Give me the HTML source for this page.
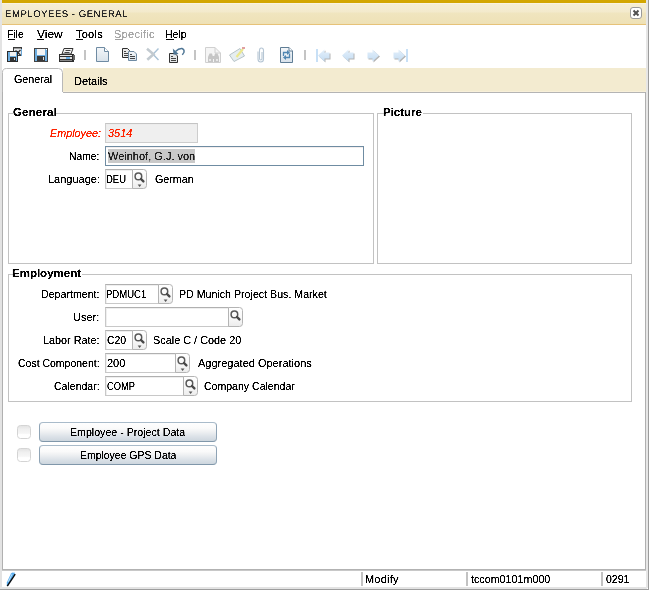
<!DOCTYPE html><html><head><meta charset="utf-8"><style>html,body{margin:0;padding:0;}body{width:649px;height:590px;position:relative;overflow:hidden;background:#fff;font-family:"Liberation Sans",sans-serif;}.t{position:absolute;white-space:nowrap;line-height:13px;font-family:"Liberation Sans",sans-serif;filter:url(#crisp);}</style></head><body><svg width="0" height="0" style="position:absolute"><filter id="crisp"><feComponentTransfer><feFuncA type="linear" slope="3" intercept="-0.65"/></feComponentTransfer></filter></svg>
<div style="position:absolute;left:0px;top:0px;width:2px;height:590px;background:#e3e3e3;"></div>
<div style="position:absolute;left:646px;top:0px;width:2px;height:590px;background:#e6e6e6;"></div>
<div style="position:absolute;left:648px;top:0px;width:1px;height:590px;background:#9c9c9c;"></div>
<div style="position:absolute;left:2px;top:587px;width:644px;height:2px;background:#e3e3e3;"></div>
<div style="position:absolute;left:0px;top:589px;width:649px;height:1px;background:#9e9e9e;"></div>
<div style="position:absolute;left:647px;top:588px;width:1px;height:1px;background:#fff;"></div>
<div style="position:absolute;left:2px;top:0px;width:644px;height:3px;background:#d3a600;"></div>
<div style="position:absolute;left:2px;top:3px;width:644px;height:21px;background:linear-gradient(#faf3de 0px,#faf3de 1px,#f5edd3 1px,#f3eacc 9px,#f0e5bf 10px,#eee1b6 21px);"></div>
<div style="position:absolute;left:2px;top:24px;width:644px;height:1px;background:#e6c278;"></div>
<svg style="position:absolute;left:630px;top:7px" width="12" height="12" viewBox="0 0 12 12"><rect x="0.5" y="0.5" width="11" height="11" rx="2.5" fill="#fff" stroke="#9a9a9a"/><path d="M3.5 3.5L8.5 8.5M8.5 3.5L3.5 8.5" stroke="#505050" stroke-width="2"/></svg>
<div style="position:absolute;left:63px;top:68px;width:583px;height:24px;background:#f3ebd0;"></div>
<div style="position:absolute;left:63px;top:91px;width:583px;height:1px;background:#f8f0da;"></div>
<div style="position:absolute;left:63px;top:92px;width:583px;height:1px;background:#b4b4b4;"></div>
<svg style="position:absolute;left:2px;top:68px" width="61" height="25" viewBox="0 0 61 25"><path d="M0.5 25V4.5A4 4 0 0 1 4.5 0.5H56.5A4 4 0 0 1 60.5 4.5V24" fill="#fff" stroke="#b8b8b8"/></svg>
<div style="position:absolute;left:2px;top:92px;width:1px;height:479px;background:#b0b0b0;"></div>
<div style="position:absolute;left:645px;top:92px;width:1px;height:479px;background:#b0b0b0;"></div>
<div style="position:absolute;left:2px;top:569px;width:644px;height:1px;background:#b2b2b2;"></div>
<div style="position:absolute;left:2px;top:570px;width:644px;height:1px;background:#c8c8c8;"></div>
<div style="position:absolute;left:8px;top:113px;width:364px;height:149px;border:1px solid #c2c2c2;"></div>
<div style="position:absolute;left:377px;top:113px;width:253px;height:149px;border:1px solid #c2c2c2;"></div>
<div style="position:absolute;left:8px;top:274px;width:622px;height:126px;border:1px solid #c2c2c2;"></div>
<div style="position:absolute;left:13px;top:106px;width:43px;height:12px;background:#fff;"></div>
<div style="position:absolute;left:384px;top:106px;width:39px;height:12px;background:#fff;"></div>
<div style="position:absolute;left:13px;top:267px;width:69px;height:12px;background:#fff;"></div>
<div style="position:absolute;left:105px;top:123px;width:93px;height:20px;background:#efefef;box-sizing:border-box;border:1px solid #cdcdcd;border-top-color:#c4c4c4;"></div><div style="position:absolute;left:106px;top:124px;width:91px;height:1px;background:#ececec;"></div><div style="position:absolute;left:106px;top:124px;width:1px;height:18px;background:#ececec;"></div>
<div style="position:absolute;left:105px;top:146px;width:259px;height:20px;box-sizing:border-box;border:1px solid #6f8ca2;background:#fff;"></div>
<div style="position:absolute;left:106px;top:147px;width:257px;height:1px;background:#f3eeee;"></div>
<div style="position:absolute;left:108px;top:149px;width:87px;height:14px;background:#c9c9c9;"></div>
<div style="position:absolute;left:105px;top:169px;width:28px;height:20px;background:#fff;box-sizing:border-box;border:1px solid #c8c8c8;border-top-color:#b0b0b0;"></div><div style="position:absolute;left:106px;top:170px;width:26px;height:1px;background:#efefef;"></div><div style="position:absolute;left:106px;top:170px;width:1px;height:18px;background:#efefef;"></div>
<svg style="position:absolute;left:132px;top:169px" width="15" height="20" viewBox="0 0 15 20"><defs><linearGradient id="sg" x1="0" y1="0" x2="0" y2="1"><stop offset="0" stop-color="#fff"/><stop offset="0.55" stop-color="#f8f8f8"/><stop offset="1" stop-color="#ececec"/></linearGradient></defs><path d="M0.5 0.5H11.5A3 3 0 0 1 14.5 3.5V16.5A3 3 0 0 1 11.5 19.5H0.5Z" fill="url(#sg)" stroke="#b4b4b4"/><circle cx="6.4" cy="7.4" r="3.3" fill="none" stroke="#585858" stroke-width="1.5"/><path d="M9 10L11.4 12.4" stroke="#484848" stroke-width="2.4" stroke-linecap="round"/><path d="M5.7 15.6h3.8l-1.9 2.4z" fill="#585858"/></svg>
<div style="position:absolute;left:105px;top:284px;width:54px;height:20px;background:#fff;box-sizing:border-box;border:1px solid #c8c8c8;border-top-color:#b0b0b0;"></div><div style="position:absolute;left:106px;top:285px;width:52px;height:1px;background:#efefef;"></div><div style="position:absolute;left:106px;top:285px;width:1px;height:18px;background:#efefef;"></div>
<svg style="position:absolute;left:158px;top:284px" width="15" height="20" viewBox="0 0 15 20"><defs><linearGradient id="sg" x1="0" y1="0" x2="0" y2="1"><stop offset="0" stop-color="#fff"/><stop offset="0.55" stop-color="#f8f8f8"/><stop offset="1" stop-color="#ececec"/></linearGradient></defs><path d="M0.5 0.5H11.5A3 3 0 0 1 14.5 3.5V16.5A3 3 0 0 1 11.5 19.5H0.5Z" fill="url(#sg)" stroke="#b4b4b4"/><circle cx="6.4" cy="7.4" r="3.3" fill="none" stroke="#585858" stroke-width="1.5"/><path d="M9 10L11.4 12.4" stroke="#484848" stroke-width="2.4" stroke-linecap="round"/><path d="M5.7 15.6h3.8l-1.9 2.4z" fill="#585858"/></svg>
<div style="position:absolute;left:105px;top:307px;width:124px;height:20px;background:#fff;box-sizing:border-box;border:1px solid #c8c8c8;border-top-color:#b0b0b0;"></div><div style="position:absolute;left:106px;top:308px;width:122px;height:1px;background:#efefef;"></div><div style="position:absolute;left:106px;top:308px;width:1px;height:18px;background:#efefef;"></div>
<svg style="position:absolute;left:228px;top:307px" width="15" height="20" viewBox="0 0 15 20"><defs><linearGradient id="sg" x1="0" y1="0" x2="0" y2="1"><stop offset="0" stop-color="#fff"/><stop offset="0.55" stop-color="#f8f8f8"/><stop offset="1" stop-color="#ececec"/></linearGradient></defs><path d="M0.5 0.5H11.5A3 3 0 0 1 14.5 3.5V16.5A3 3 0 0 1 11.5 19.5H0.5Z" fill="url(#sg)" stroke="#b4b4b4"/><circle cx="6.4" cy="7.4" r="3.3" fill="none" stroke="#585858" stroke-width="1.5"/><path d="M9 10L11.4 12.4" stroke="#484848" stroke-width="2.4" stroke-linecap="round"/></svg>
<div style="position:absolute;left:105px;top:330px;width:28px;height:20px;background:#fff;box-sizing:border-box;border:1px solid #c8c8c8;border-top-color:#b0b0b0;"></div><div style="position:absolute;left:106px;top:331px;width:26px;height:1px;background:#efefef;"></div><div style="position:absolute;left:106px;top:331px;width:1px;height:18px;background:#efefef;"></div>
<svg style="position:absolute;left:132px;top:330px" width="15" height="20" viewBox="0 0 15 20"><defs><linearGradient id="sg" x1="0" y1="0" x2="0" y2="1"><stop offset="0" stop-color="#fff"/><stop offset="0.55" stop-color="#f8f8f8"/><stop offset="1" stop-color="#ececec"/></linearGradient></defs><path d="M0.5 0.5H11.5A3 3 0 0 1 14.5 3.5V16.5A3 3 0 0 1 11.5 19.5H0.5Z" fill="url(#sg)" stroke="#b4b4b4"/><circle cx="6.4" cy="7.4" r="3.3" fill="none" stroke="#585858" stroke-width="1.5"/><path d="M9 10L11.4 12.4" stroke="#484848" stroke-width="2.4" stroke-linecap="round"/><path d="M5.7 15.6h3.8l-1.9 2.4z" fill="#585858"/></svg>
<div style="position:absolute;left:105px;top:353px;width:71px;height:20px;background:#fff;box-sizing:border-box;border:1px solid #c8c8c8;border-top-color:#b0b0b0;"></div><div style="position:absolute;left:106px;top:354px;width:69px;height:1px;background:#efefef;"></div><div style="position:absolute;left:106px;top:354px;width:1px;height:18px;background:#efefef;"></div>
<svg style="position:absolute;left:175px;top:353px" width="15" height="20" viewBox="0 0 15 20"><defs><linearGradient id="sg" x1="0" y1="0" x2="0" y2="1"><stop offset="0" stop-color="#fff"/><stop offset="0.55" stop-color="#f8f8f8"/><stop offset="1" stop-color="#ececec"/></linearGradient></defs><path d="M0.5 0.5H11.5A3 3 0 0 1 14.5 3.5V16.5A3 3 0 0 1 11.5 19.5H0.5Z" fill="url(#sg)" stroke="#b4b4b4"/><circle cx="6.4" cy="7.4" r="3.3" fill="none" stroke="#585858" stroke-width="1.5"/><path d="M9 10L11.4 12.4" stroke="#484848" stroke-width="2.4" stroke-linecap="round"/><path d="M5.7 15.6h3.8l-1.9 2.4z" fill="#585858"/></svg>
<div style="position:absolute;left:105px;top:376px;width:79px;height:20px;background:#fff;box-sizing:border-box;border:1px solid #c8c8c8;border-top-color:#b0b0b0;"></div><div style="position:absolute;left:106px;top:377px;width:77px;height:1px;background:#efefef;"></div><div style="position:absolute;left:106px;top:377px;width:1px;height:18px;background:#efefef;"></div>
<svg style="position:absolute;left:183px;top:376px" width="15" height="20" viewBox="0 0 15 20"><defs><linearGradient id="sg" x1="0" y1="0" x2="0" y2="1"><stop offset="0" stop-color="#fff"/><stop offset="0.55" stop-color="#f8f8f8"/><stop offset="1" stop-color="#ececec"/></linearGradient></defs><path d="M0.5 0.5H11.5A3 3 0 0 1 14.5 3.5V16.5A3 3 0 0 1 11.5 19.5H0.5Z" fill="url(#sg)" stroke="#b4b4b4"/><circle cx="6.4" cy="7.4" r="3.3" fill="none" stroke="#585858" stroke-width="1.5"/><path d="M9 10L11.4 12.4" stroke="#484848" stroke-width="2.4" stroke-linecap="round"/><path d="M5.7 15.6h3.8l-1.9 2.4z" fill="#585858"/></svg>
<svg style="position:absolute;left:17px;top:425px" width="14" height="14" viewBox="0 0 14 14"><defs><linearGradient id="cb425" x1="0" y1="0" x2="0" y2="1"><stop offset="0" stop-color="#e2e2e2"/><stop offset="0.3" stop-color="#f0f0f0"/><stop offset="0.6" stop-color="#f6f6f6"/><stop offset="0.7" stop-color="#fff"/></linearGradient></defs><rect x="0.5" y="0.5" width="13" height="13" rx="3" fill="url(#cb425)" stroke="#d4d4d4"/></svg>
<svg style="position:absolute;left:17px;top:448px" width="14" height="14" viewBox="0 0 14 14"><defs><linearGradient id="cb448" x1="0" y1="0" x2="0" y2="1"><stop offset="0" stop-color="#e2e2e2"/><stop offset="0.3" stop-color="#f0f0f0"/><stop offset="0.6" stop-color="#f6f6f6"/><stop offset="0.7" stop-color="#fff"/></linearGradient></defs><rect x="0.5" y="0.5" width="13" height="13" rx="3" fill="url(#cb448)" stroke="#d4d4d4"/></svg>
<div style="position:absolute;left:39px;top:422px;width:178px;height:20px;box-sizing:border-box;border:1px solid #8ea3b5;border-top-color:#a9bbca;border-bottom-color:#8097aa;border-radius:4px;background:linear-gradient(#fefefe 0%,#fafafa 30%,#eef0f2 50%,#dce2e8 75%,#cdd6de 100%);"></div>
<div style="position:absolute;left:39px;top:445px;width:178px;height:20px;box-sizing:border-box;border:1px solid #8ea3b5;border-top-color:#a9bbca;border-bottom-color:#8097aa;border-radius:4px;background:linear-gradient(#fefefe 0%,#fafafa 30%,#eef0f2 50%,#dce2e8 75%,#cdd6de 100%);"></div>
<div style="position:absolute;left:361px;top:572px;width:2px;height:14px;background:#c2c2c2;"></div>
<div style="position:absolute;left:466px;top:572px;width:2px;height:14px;background:#c2c2c2;"></div>
<div style="position:absolute;left:601px;top:572px;width:2px;height:14px;background:#c2c2c2;"></div>
<svg style="position:absolute;left:0;top:44px" width="420" height="22" viewBox="0 44 420 22">
<defs>
<linearGradient id="docg" x1="0" y1="0" x2="0" y2="1"><stop offset="0" stop-color="#f4f7fa"/><stop offset="1" stop-color="#d9e2ea"/></linearGradient>
<linearGradient id="arrg" x1="0" y1="0" x2="0" y2="1"><stop offset="0" stop-color="#e4f0fb"/><stop offset="1" stop-color="#c4dcf2"/></linearGradient>
</defs>
<!-- 1 save & close -->
<g shape-rendering="crispEdges">
<rect x="13" y="47" width="9" height="9" fill="#3a3a3a"/>
<rect x="14" y="48" width="7" height="7" fill="#e6e8ea"/>
<rect x="14" y="48" width="7" height="1" fill="#9a9a9a"/>
<rect x="21" y="49" width="1" height="7" fill="#6aa6d8"/>
</g>
<path d="M15.5 50.5 L20.5 55 M20.5 50 L16 54.5" stroke="#2c2c2c" stroke-width="1.3"/>
<g shape-rendering="crispEdges">
<rect x="7" y="51" width="11" height="11" fill="#2c2c2c"/>
<rect x="8" y="52" width="9" height="9" fill="#6eaee0"/>
<rect x="10" y="52" width="6" height="4" fill="#f2f2f2"/>
<rect x="10" y="57" width="6" height="4" fill="#333"/>
<rect x="14" y="58" width="1" height="2" fill="#ddd"/>
</g>
<!-- 2 floppy -->
<g shape-rendering="crispEdges">
<rect x="34" y="48" width="14" height="14" fill="#444"/>
<rect x="35" y="49" width="12" height="12" fill="#6eaee0"/>
<rect x="37" y="49" width="8" height="6" fill="#f4f4f4"/>
<rect x="37" y="56" width="8" height="5" fill="#3a3a3a"/>
<rect x="43" y="57" width="1" height="3" fill="#ddd"/>
<rect x="46" y="49" width="1" height="1" fill="#fff"/>
</g>
<!-- 3 printer -->
<path d="M64 48.5 H73 L71 54 H62 Z" fill="#f2f2f2" stroke="#333" stroke-width="1"/>
<path d="M65.5 50.5 H70.5 M64.5 52.5 H69.5" stroke="#444" stroke-width="1"/>
<g shape-rendering="crispEdges">
<rect x="59" y="54" width="15" height="8" fill="#2e2e2e"/>
<rect x="60" y="55" width="12" height="1" fill="#e8e8e8"/>
<rect x="60" y="57" width="12" height="2" fill="#e0e0e0"/>
<rect x="66" y="57" width="4" height="2" fill="#6ab0e8"/>
<rect x="60" y="60" width="12" height="1" fill="#888"/>
<rect x="73" y="55" width="2" height="5" fill="#666"/>
</g>
<!-- sep -->
<rect x="84" y="50" width="2" height="10" fill="#c4c4c4" shape-rendering="crispEdges"/>
<!-- 5 new doc -->
<path d="M96.5 47.5 H104.5 L108.5 51.5 V61.5 H96.5 Z" fill="url(#docg)" stroke="#6f8ba3"/>
<path d="M104.5 47.5 V51.5 H108.5" fill="#fff" stroke="#6f8ba3"/>
<!-- 6 copy -->
<path d="M122.5 48.5 H127.5 L129.5 50.5 V57.5 H122.5 Z" fill="#eaeaea" stroke="#2e2e2e"/>
<path d="M124 51.5 H126 M124 53.5 H128 M124 55.5 H128" stroke="#444"/>
<path d="M128.5 51.5 H134 L136.5 54 V60.5 H128.5 Z" fill="url(#docg)" stroke="#6f8ba3"/>
<path d="M130 54.5 H132 M130 56.5 H135 M130 58.5 H135" stroke="#444"/>
<!-- 7 delete X -->
<path d="M158.5 48.5 L153 54.2 L158.5 60" fill="none" stroke="#a9c2d6" stroke-width="1.4"/>
<path d="M147 48.8 L153.5 54.2 L147.3 59.8" fill="none" stroke="#c2cad0" stroke-width="2.6"/>
<!-- 8 undo -->
<path d="M169.5 53.5 H175 L177.5 56 V62.5 H169.5 Z" fill="#e4e6e8" stroke="#333"/>
<path d="M171 56.5 H173 M171 58.5 H176 M171 60.5 H176" stroke="#444"/>
<path d="M172.8 48.6 L173.6 54.8 L178.6 54 Z" fill="#4f7695"/>
<path d="M175.5 51.5 Q178.5 48.3 182 48.5 Q184.6 49.3 184 52.3 L182.3 54.8" fill="none" stroke="#4f7695" stroke-width="1.4"/>
<!-- sep -->
<rect x="194" y="50" width="2" height="10" fill="#c4c4c4" shape-rendering="crispEdges"/>
<!-- 10 find disabled -->
<path d="M205.5 47.5 H215 L220.5 53 V62.5 H205.5 Z" fill="#f5f5f5" stroke="#d0d0d0"/>
<path d="M215 47.5 V53 H220.5" fill="none" stroke="#d0d0d0"/>
<g fill="#c6c6c6">
<path d="M208 62 V57 L209.5 53.5 H212 L213 57 V62 Z"/>
<path d="M214 62 V57 L215 53.5 H217.5 L219 57 V62 Z"/>
<rect x="212" y="56" width="3" height="3"/>
</g>
<rect x="209" y="59" width="2" height="2" fill="#e8e8e8"/><rect x="216" y="59" width="2" height="2" fill="#e8e8e8"/>
<!-- 11 edit -->
<path d="M229.5 55 L240 48.5 L244.5 56 L234 61.5 Z" fill="#e6eef0" stroke="#b8c4c8"/>
<path d="M236.5 57 L243 49" stroke="#ece88c" stroke-width="2.2"/>
<rect x="242" y="47" width="3" height="2" fill="#e0a0a0"/>
<!-- 12 clip -->
<path d="M258 51.5 V59 Q258 62 260.8 62 Q263.5 62 263.5 59 V50.5 Q263.5 48 261.3 48 Q259.5 48 259.5 50.5 V58.5 Q259.5 60 260.8 60 Q262 60 262 58.5 V52" fill="none" stroke="#b6c6d4" stroke-width="1.1"/>
<!-- 13 refresh doc -->
<path d="M280.5 47.5 H289 L292.5 51 V62.5 H280.5 Z" fill="url(#docg)" stroke="#5f7d95"/>
<path d="M289 47.5 V51 H292.5" fill="#fff" stroke="#5f7d95"/>
<path d="M283.5 56 V52.5 H287.5" fill="none" stroke="#4f86b2" stroke-width="1.3"/>
<path d="M287 50 L290 52.5 L287 55 Z" fill="#4f86b2"/>
<path d="M289.5 53.5 V57.5 H285.5" fill="none" stroke="#4f86b2" stroke-width="1.3"/>
<path d="M286 55 L283 57.5 L286 60 Z" fill="#4f86b2"/>
<!-- sep -->
<rect x="304" y="50" width="2" height="10" fill="#c4c4c4" shape-rendering="crispEdges"/>
<!-- nav arrows -->
<rect x="316" y="49" width="2" height="13" fill="#c8e0f6" shape-rendering="crispEdges"/>
<path d="M319 56.5 L325.5 50.5 V53.5 H330.5 V59.5 H325.5 V62.5 Z" fill="#b4b4b4"/><path d="M318 55.5 L324.5 49.5 V52.5 H329.5 V58.5 H324.5 V61.5 Z" fill="url(#arrg)"/>
<path d="M343 56.5 L349.5 50.5 V53.5 H354.5 V59.5 H349.5 V62.5 Z" fill="#b4b4b4"/><path d="M342 55.5 L348.5 49.5 V52.5 H353.5 V58.5 H348.5 V61.5 Z" fill="url(#arrg)"/>
<path d="M380 56.5 L373.5 50.5 V53.5 H368.5 V59.5 H373.5 V62.5 Z" fill="#b4b4b4"/><path d="M379 55.5 L372.5 49.5 V52.5 H367.5 V58.5 H372.5 V61.5 Z" fill="url(#arrg)"/>
<path d="M406 56.5 L399.5 50.5 V53.5 H394.5 V59.5 H399.5 V62.5 Z" fill="#b4b4b4"/><path d="M405 55.5 L398.5 49.5 V52.5 H393.5 V58.5 H398.5 V61.5 Z" fill="url(#arrg)"/>
<rect x="406" y="49" width="2" height="13" fill="#c8e0f6" shape-rendering="crispEdges"/>
</svg>
<svg style="position:absolute;left:6px;top:571px" width="12" height="16" viewBox="0 0 12 16"><path d="M0.8 15 L0.8 11.5 L5 2.5 Q6 1 7.5 1 Q9.2 1.3 9.2 3 L2 15 Z" fill="#56acf0"/><path d="M9.2 3.2 L1.3 15.2" stroke="#0a0a0a" stroke-width="1.4"/><path d="M2.3 10.8 L6 3.2" stroke="#bfe2fa" stroke-width="1"/><path d="M6.5 1.6 Q7.8 1.3 8.6 2.2" stroke="#fff" stroke-width="0.8" fill="none"/></svg>

<div class="t" style="left:5px;top:8px;font-size:9.6px;font-weight:normal;font-style:normal;color:#262626;letter-spacing:0.5px;text-rendering:geometricPrecision;">EMPLOYEES - GENERAL</div>
<div class="t" style="left:7px;top:28px;font-size:11px;font-weight:normal;font-style:normal;color:#000;letter-spacing:0.0px;transform:scale(0.9375,1.0);transform-origin:0 0;">File</div>
<div class="t" style="left:37px;top:28px;font-size:11px;font-weight:normal;font-style:normal;color:#000;letter-spacing:0.0px;transform:scale(1.0833,1.0);transform-origin:0 0;">View</div>
<div class="t" style="left:76px;top:28px;font-size:11px;font-weight:normal;font-style:normal;color:#000;letter-spacing:0.25px;">Tools</div>
<div class="t" style="left:114px;top:28px;font-size:11px;font-weight:normal;font-style:normal;color:#a8a8a8;letter-spacing:0.286px;">Specific</div>
<div class="t" style="left:165px;top:28px;font-size:11px;font-weight:normal;font-style:normal;color:#000;letter-spacing:0.0px;transform:scale(0.9524,1.0);transform-origin:0 0;">Help</div>
<div class="t" style="left:14px;top:73px;font-size:11px;font-weight:normal;font-style:normal;color:#000;letter-spacing:0.0px;transform:scale(0.9744,1.0);transform-origin:0 0;">General</div>
<div class="t" style="left:74px;top:75px;font-size:11px;font-weight:normal;font-style:normal;color:#000;letter-spacing:0.0px;">Details</div>
<div class="t" style="left:13px;top:106px;font-size:11.5px;font-weight:bold;font-style:normal;color:#000;letter-spacing:0.167px;">General</div>
<div class="t" style="left:383px;top:106px;font-size:11.5px;font-weight:bold;font-style:normal;color:#000;letter-spacing:0.0px;">Picture</div>
<div class="t" style="left:12px;top:267px;font-size:11.5px;font-weight:bold;font-style:normal;color:#000;letter-spacing:0.0px;">Employment</div>
<div class="t" style="left:50px;top:127px;font-size:11px;font-weight:normal;font-style:italic;color:#ff2400;letter-spacing:0.0px;transform:scale(0.9808,1.0);transform-origin:0 0;">Employee:</div>
<div class="t" style="left:108px;top:127px;font-size:11px;font-weight:normal;font-style:italic;color:#ff2400;letter-spacing:0.0px;">3514</div>
<div class="t" style="left:69px;top:150px;font-size:11px;font-weight:normal;font-style:normal;color:#000;letter-spacing:0.0px;transform:scale(0.9355,1.0);transform-origin:0 0;">Name:</div>
<div class="t" style="left:108px;top:150px;font-size:11px;font-weight:normal;font-style:normal;color:#202020;letter-spacing:0.0px;">Weinhof, G.J. von</div>
<div class="t" style="left:48px;top:173px;font-size:11px;font-weight:normal;font-style:normal;color:#000;letter-spacing:0.0px;">Language:</div>
<div class="t" style="left:106px;top:173px;font-size:11px;font-weight:normal;font-style:normal;color:#000;letter-spacing:0.0px;transform:scale(0.8636,1.0);transform-origin:0 0;">DEU</div>
<div class="t" style="left:155px;top:173px;font-size:11px;font-weight:normal;font-style:normal;color:#000;letter-spacing:0.0px;transform:scale(0.9744,1.0);transform-origin:0 0;">German</div>
<div class="t" style="left:41px;top:288px;font-size:11px;font-weight:normal;font-style:normal;color:#000;letter-spacing:0.0px;transform:scale(0.9661,1.0);transform-origin:0 0;">Department:</div>
<div class="t" style="left:106px;top:288px;font-size:11px;font-weight:normal;font-style:normal;color:#000;letter-spacing:0.0px;transform:scale(0.8667,1.0);transform-origin:0 0;">PDMUC1</div>
<div class="t" style="left:179px;top:288px;font-size:11px;font-weight:normal;font-style:normal;color:#000;letter-spacing:0.0px;transform:scale(0.9671,1.0);transform-origin:0 0;">PD Munich Project Bus. Market</div>
<div class="t" style="left:73px;top:311px;font-size:11px;font-weight:normal;font-style:normal;color:#000;letter-spacing:0.0px;">User:</div>
<div class="t" style="left:43px;top:334px;font-size:11px;font-weight:normal;font-style:normal;color:#000;letter-spacing:0.0px;transform:scale(0.9821,1.0);transform-origin:0 0;">Labor Rate:</div>
<div class="t" style="left:107px;top:334px;font-size:11px;font-weight:normal;font-style:normal;color:#000;letter-spacing:0.0px;transform:scale(0.95,1.0);transform-origin:0 0;">C20</div>
<div class="t" style="left:153px;top:334px;font-size:11px;font-weight:normal;font-style:normal;color:#000;letter-spacing:0.0px;transform:scale(0.9886,1.0);transform-origin:0 0;">Scale C / Code 20</div>
<div class="t" style="left:18px;top:357px;font-size:11px;font-weight:normal;font-style:normal;color:#000;letter-spacing:0.0px;transform:scale(0.9529,1.0);transform-origin:0 0;">Cost Component:</div>
<div class="t" style="left:107px;top:357px;font-size:11px;font-weight:normal;font-style:normal;color:#000;letter-spacing:0.0px;">200</div>
<div class="t" style="left:198px;top:357px;font-size:11px;font-weight:normal;font-style:normal;color:#000;letter-spacing:0.0px;">Aggregated Operations</div>
<div class="t" style="left:54px;top:380px;font-size:11px;font-weight:normal;font-style:normal;color:#000;letter-spacing:0.0px;transform:scale(0.9574,1.0);transform-origin:0 0;">Calendar:</div>
<div class="t" style="left:107px;top:380px;font-size:11px;font-weight:normal;font-style:normal;color:#000;letter-spacing:0.0px;transform:scale(0.8485,1.0);transform-origin:0 0;">COMP</div>
<div class="t" style="left:204px;top:380px;font-size:11px;font-weight:normal;font-style:normal;color:#000;letter-spacing:0.0px;transform:scale(0.9579,1.0);transform-origin:0 0;">Company Calendar</div>
<div class="t" style="left:70px;top:426px;font-size:11px;font-weight:normal;font-style:normal;color:#000;letter-spacing:0.0px;transform:scale(0.9661,1.0);transform-origin:0 0;">Employee - Project Data</div>
<div class="t" style="left:80px;top:449px;font-size:11px;font-weight:normal;font-style:normal;color:#000;letter-spacing:0.0px;transform:scale(0.95,1.0);transform-origin:0 0;">Employee GPS Data</div>
<div class="t" style="left:365px;top:573px;font-size:11px;font-weight:normal;font-style:normal;color:#000;letter-spacing:0.2px;">Modify</div>
<div class="t" style="left:471px;top:573px;font-size:11px;font-weight:normal;font-style:normal;color:#000;letter-spacing:0.0px;transform:scale(0.9753,1.0);transform-origin:0 0;">tccom0101m000</div>
<div class="t" style="left:606px;top:573px;font-size:11px;font-weight:normal;font-style:normal;color:#000;letter-spacing:0.0px;transform:scale(0.9583,1.0);transform-origin:0 0;">0291</div>
<div style="position:absolute;left:8px;top:39px;width:7px;height:1px;background:#000;"></div>
<div style="position:absolute;left:37px;top:39px;width:7px;height:1px;background:#000;"></div>
<div style="position:absolute;left:76px;top:39px;width:7px;height:1px;background:#000;"></div>
<div style="position:absolute;left:166px;top:39px;width:8px;height:1px;background:#000;"></div>
<div style="position:absolute;left:115px;top:39px;width:7px;height:1px;background:#a0a0a0;"></div>
</body></html>
